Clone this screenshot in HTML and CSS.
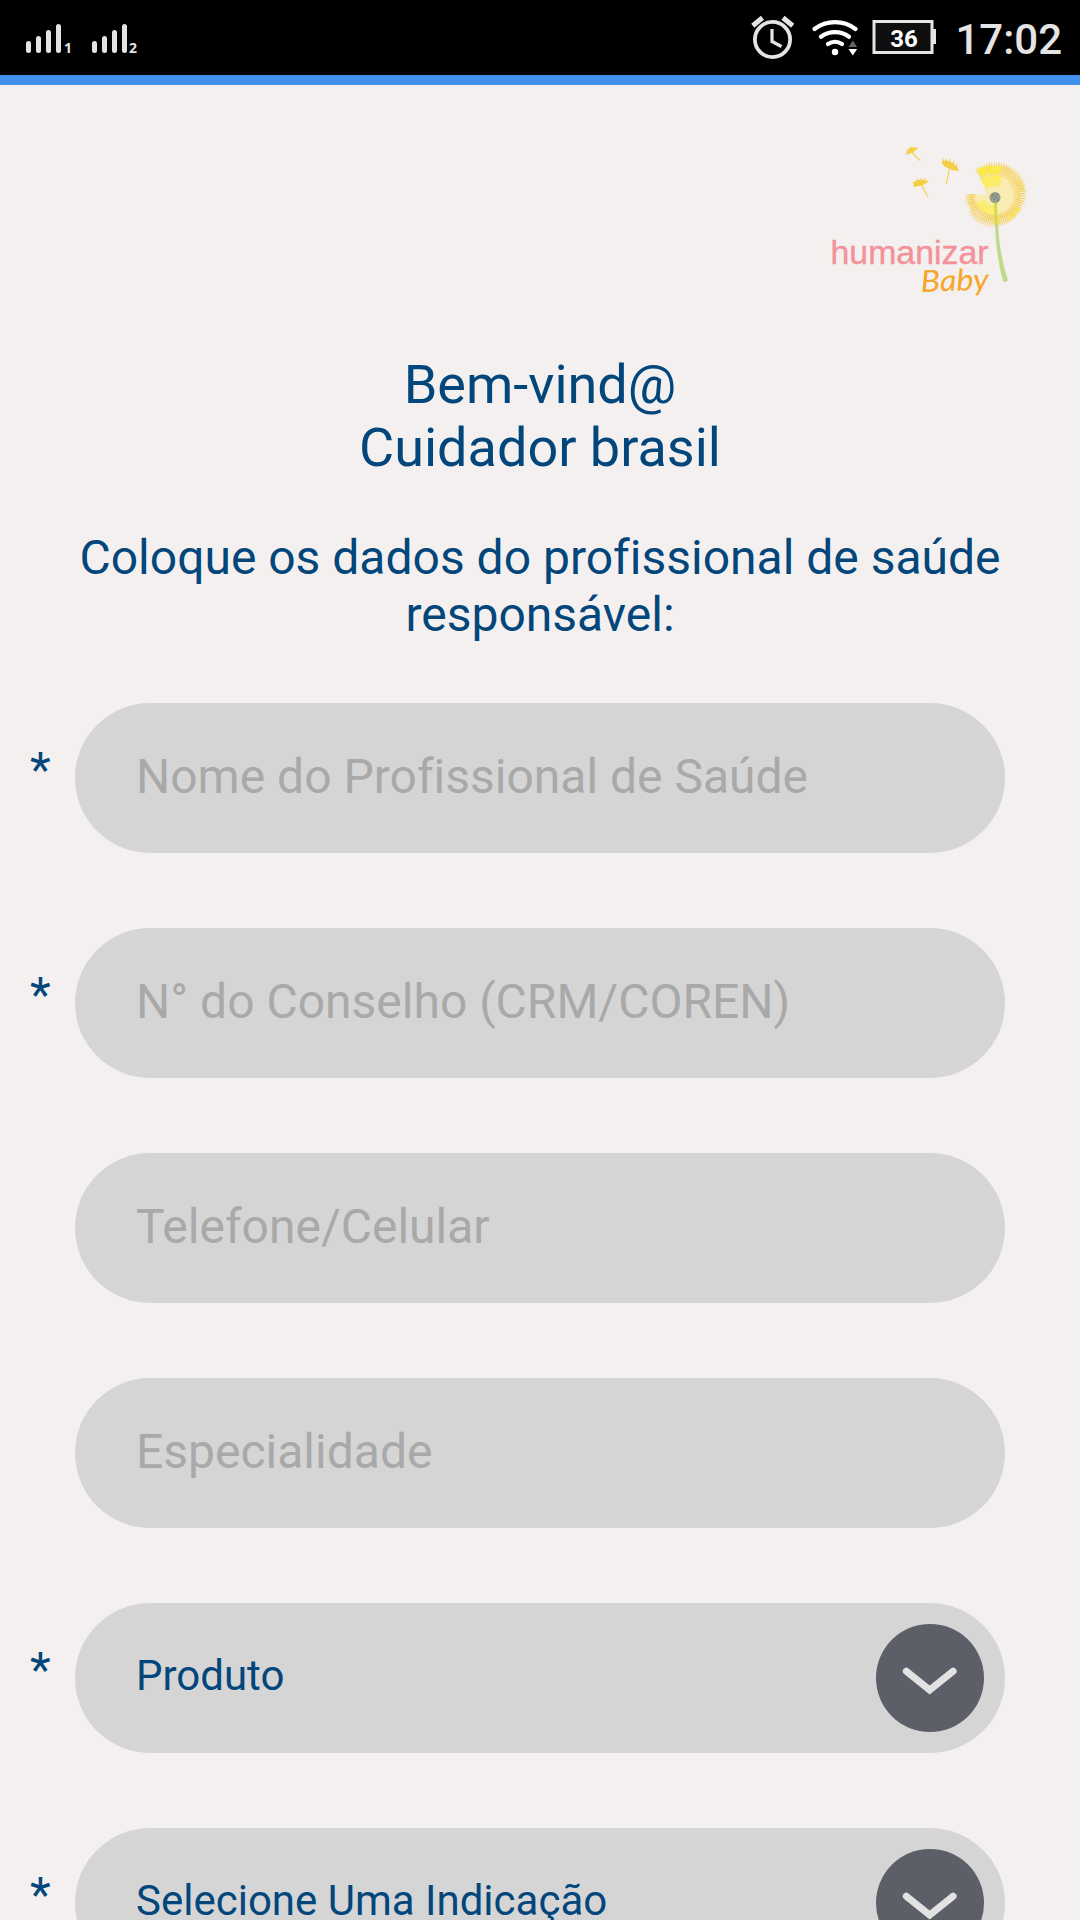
FILE: index.html
```html
<!DOCTYPE html>
<html lang="pt-BR">

<head>
    <meta charset="UTF-8" />
    <meta name="viewport" content="width=device-width, initial-scale=1.0" />
    <title>Humanizar Baby</title>
    <link rel="stylesheet" href="styles.css">
</head>

<body>
    <div class="status-bar">
        <svg class="sinal" width="160" height="75" viewBox="0 0 160 75">
            <g stroke="#e4e4e4" stroke-width="5" stroke-linecap="round">
                <path d="M28.5 43.5v7M38.5 38.5v12M48.5 32.5v18M58.5 26.5v24" />
                <path d="M94.5 43.5v7M104.5 38.5v12M114.5 32.5v18M124.5 26.5v24" />
            </g>
            <text x="64" y="53">1</text>
            <text x="129" y="53">2</text>
        </svg>

        <div class="status-direita">
            <svg width="210" height="75" viewBox="0 0 210 75">
                <!-- alarme -->
                <g fill="none" stroke="#e4e4e4">
                    <circle cx="32.5" cy="39.5" r="17.6" stroke-width="3.8" />
                    <path d="M32 29v12.5l9.5 5" stroke-width="3.2" />
                    <path d="M12.8 25.7l9.7-7.9M43 17.8l9.7 7.9" stroke-width="5" />
                </g>
                <!-- wifi -->
                <g fill="none" stroke="#fff" stroke-width="4.2" stroke-linecap="round">
                    <path d="M74.5 29a34 34 0 0 1 41 0" />
                    <path d="M81 36.7a23.5 23.5 0 0 1 28 0" />
                    <path d="M88 44a12.5 12.5 0 0 1 14 0" />
                </g>
                <circle cx="95" cy="52" r="3.2" fill="#fff" />
                <path d="M108.5 47l4.3-6.5 4.3 6.5z" fill="#666" />
                <path d="M108.5 49l4.3 6.5 4.3-6.5z" fill="#fff" />
                <!-- bateria -->
                <rect x="134" y="21.5" width="58" height="31" fill="#0e0e0e" stroke="#e4e4e4" stroke-width="3" />
                <path d="M193 29h3v15h-3z" fill="#e4e4e4" />
                <text class="carga" x="164" y="46.5">36</text>
            </svg>
            <span class="hora">17:02</span>
        </div>
    </div>

    <main class="tela">
        <svg class="logo" width="240" height="180" viewBox="0 0 240 180">
            <!-- sementes -->
            <g fill="#f4cf45" stroke="#f4cf45">
                <path d="M96 25q0-6 5-7.500l7 0q-3 5-12 7.500z" stroke="none" />
                <path d="M99 22l-2-2M102 20l-2-3M105 19l-1-2M102 22.500l8 8" stroke-width="1.100" />
                <path d="M131.500 32q4-3 9 0q7 3 8.500 8.500q-5 1-10-2q-6-2-7.500-6.500z" stroke="none" />
                <path d="M134 33l-1-4M137 33l-1-4.500M140 34l0-4.500M143 35l1-4M146 37l1.500-3M139.500 38.500l-3.300 15.500" stroke-width="1.100" />
                <path d="M103.500 57q-1-6 5-7q6-1 9.500 2q-4 4-14.500 5z" stroke="none" />
                <path d="M105 54l-2-2M108 52l-1-3M111 51l0-3M114 51l1-2.500M116 52l2.500-1.500M111.500 55l6.500 12" stroke-width="1.100" />
            </g>

            <!-- dente-de-leao -->
            <g fill="none">
                <path d="M168 43a26 26 0 1 1-8 22q9-3 15 1q2-9-7-23z" fill="#fbe88c" fill-opacity=".6" />
                <path d="M167 42a28 28 0 1 1-9.500 24" stroke="#f6d552" stroke-width="6" stroke-dasharray=".7 1.600" />
                <path d="M169 44a25.500 25.500 0 1 1-9 20" stroke="#f2cf66" stroke-width="7" stroke-dasharray="1 1.300" />
                <path d="M171 48a22 22 0 1 1-8 16" stroke="#f5cd55" stroke-width="6" stroke-opacity=".6" stroke-dasharray="1.300 .9" />
                <path d="M174 52a16 16 0 1 1-6 15" stroke="#faeeb0" stroke-width="7" stroke-dasharray="1 1.200" />
                <path d="M161 81a26 26 0 0 0 43 4" stroke="#f5cf50" stroke-width="5" stroke-opacity=".6" stroke-dasharray="1 .9" />
                <path d="M169 43q9-5 22-2" stroke="#fff02a" stroke-width="8" stroke-dasharray="1.200 .7" />
                <path d="M173 54q8-5 18-2" stroke="#fff02a" stroke-width="11" stroke-opacity=".9" stroke-dasharray="1.200 .8" />
                <path d="M170 72q5 8 15 8" stroke="#fff02a" stroke-width="9" stroke-opacity=".8" stroke-dasharray="1.200 .8" />
                <path d="M198 88q7-4 10-10" stroke="#fdeb35" stroke-width="6" stroke-opacity=".7" stroke-dasharray="1 .9" />
            </g>
            <path d="M185.500 72q0 13 1 24" fill="none" stroke="#d6da45" stroke-width="2.800" />
            <path d="M185 94Q186 127 193 151Q195 153 198 150.500Q189 122 188 94z" fill="#bddb8b" />
            <circle cx="185" cy="67.500" r="5.500" fill="#9a9f80" />
            <path d="M182 65h2M186 64h2M183 69h2M187 70h2M185 67h2" stroke="#5f87ad" stroke-width="1.500" />

            <text class="logo-humanizar" x="20.500" y="134" textLength="158" lengthAdjust="spacingAndGlyphs">humanizar</text>
            <text class="logo-baby" transform="translate(111 162) rotate(-2)" textLength="68" lengthAdjust="spacingAndGlyphs">Baby</text>
        </svg>

        <h1>Bem-vind@<br>Cuidador brasil</h1>
        <h2>Coloque os dados do profissional de saúde responsável:</h2>

        <form>
            <div class="linha">
                <span class="obrigatorio">*</span>
                <input class="campo" placeholder="Nome do Profissional de Saúde" />
            </div>
            <div class="linha">
                <span class="obrigatorio">*</span>
                <input class="campo" placeholder="N° do Conselho (CRM/COREN)" />
            </div>
            <div class="linha">
                <span class="obrigatorio"></span>
                <input class="campo" placeholder="Telefone/Celular" />
            </div>
            <div class="linha">
                <span class="obrigatorio"></span>
                <input class="campo" placeholder="Especialidade" />
            </div>
            <div class="linha">
                <span class="obrigatorio">*</span>
                <div class="campo selecao">
                    <span>Produto</span>
                    <svg width="108" height="108" viewBox="0 0 108 108">
                        <circle cx="54" cy="54" r="54" fill="#5c5f67" />
                        <path d="M30.3 47.3L53.7 66 77.1 47.3" fill="none" stroke="#e2e2e2" stroke-width="7" stroke-linecap="round" />
                    </svg>
                </div>
            </div>
            <div class="linha">
                <span class="obrigatorio">*</span>
                <div class="campo selecao">
                    <span>Selecione Uma Indicação</span>
                    <svg width="108" height="108" viewBox="0 0 108 108">
                        <circle cx="54" cy="54" r="54" fill="#5c5f67" />
                        <path d="M30.3 47.3L53.7 66 77.1 47.3" fill="none" stroke="#e2e2e2" stroke-width="7" stroke-linecap="round" />
                    </svg>
                </div>
            </div>
        </form>
    </main>
</body>

</html>
```
FILE: styles.css
```css
* {
    box-sizing: border-box;
}

body {
    font-family: Roboto, sans-serif;
    font-variant-ligatures: none;
    background-color: #f4f0ef;
    color: #03467b;
    margin: 0;
    height: 1920px;
    overflow: hidden;
}

.status-bar {
    display: flex;
    justify-content: space-between;
    height: 85px;
    background-color: #000;
    border-bottom: 10px solid #4190ee;
}

.sinal text {
    font-family: "Open Sans", sans-serif;
    font-size: 14px;
    font-weight: 700;
    fill: #e4e4e4;
}

.status-direita {
    display: flex;
    align-items: center;
    padding-right: 18px;
}

.status-direita svg {
    margin-right: -1px;
}

.carga {
    font-size: 24px;
    font-weight: bold;
    fill: #fff;
    text-anchor: middle;
}

.hora {
    width: 113px;
    padding-top: 3px;
    font-size: 42px;
    font-weight: 500;
    text-align: right;
    color: #e4e4e4;
}

.tela {
    display: flex;
    flex-direction: column;
    padding-top: 45px;
}

.logo {
    align-self: flex-end;
    margin-right: 30px;
}

.logo-humanizar {
    font-family: "Liberation Sans", Arial, sans-serif;
    font-size: 34px;
    fill: #f3929a;
    stroke: #f3929a;
    stroke-width: 0.4px;
}

.logo-baby {
    font-family: Lato, sans-serif;
    font-size: 30px;
    font-style: italic;
    fill: #f7a528;
}

h1 {
    margin: 43px 0 50px;
    font-size: 54px;
    font-weight: normal;
    line-height: 63px;
    text-align: center;
}

h2 {
    margin: 0 75px 60px;
    font-size: 48px;
    font-weight: normal;
    line-height: 57px;
    text-align: center;
}

form {
    display: flex;
    flex-direction: column;
    gap: 75px;
}

.linha {
    display: flex;
    align-items: center;
    padding-right: 75px;
}

.obrigatorio {
    width: 75px;
    padding: 0 0 17px 30px;
    font-size: 48px;
}

.campo {
    flex: 1;
    height: 150px;
    padding: 0 60px 3px 61px;
    border: none;
    border-radius: 75px;
    background-color: #d5d5d5;
    color: #03467b;
    font-family: inherit;
    font-size: 48px;
    font-variant-ligatures: none;
}

.campo::placeholder {
    color: #a9a9a9;
}

.selecao {
    display: flex;
    align-items: center;
    justify-content: space-between;
    padding: 0 21px 0 61px;
    font-size: 42px;
}

.selecao span {
    padding-bottom: 5px;
}
```
